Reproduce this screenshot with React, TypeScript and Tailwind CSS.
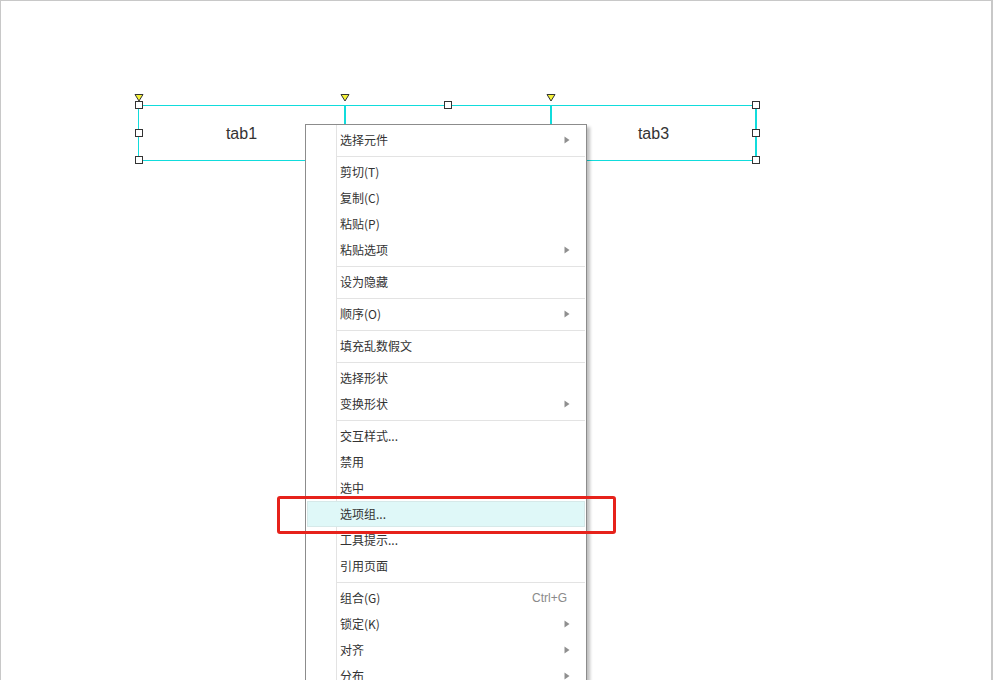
import React from "react";

type Item =
  | { sep: true }
  | { sep?: false; label: string; sub?: boolean; hint?: string; active?: boolean };

const items: Item[] = [
  { label: "选择元件", sub: true },
  { sep: true },
  { label: "剪切(T)" },
  { label: "复制(C)" },
  { label: "粘贴(P)" },
  { label: "粘贴选项", sub: true },
  { sep: true },
  { label: "设为隐藏" },
  { sep: true },
  { label: "顺序(O)", sub: true },
  { sep: true },
  { label: "填充乱数假文" },
  { sep: true },
  { label: "选择形状" },
  { label: "变换形状", sub: true },
  { sep: true },
  { label: "交互样式..." },
  { label: "禁用" },
  { label: "选中" },
  { label: "选项组...", active: true },
  { label: "工具提示..." },
  { label: "引用页面" },
  { sep: true },
  { label: "组合(G)", hint: "Ctrl+G" },
  { label: "锁定(K)", sub: true },
  { label: "对齐", sub: true },
  { label: "分布", sub: true },
];

// canvas coords are page pixels; root has a 1px border so offsets subtract 1
function Handle({ x, y }: { x: number; y: number }) {
  return (
    <div
      className="absolute h-[8px] w-[8px] border border-[#333] bg-white"
      style={{ left: x - 5, top: y - 5 }}
    />
  );
}

function Marker({ x }: { x: number }) {
  return (
    <svg className="absolute" style={{ left: x - 6, top: 92 }} width="10" height="9" viewBox="0 0 10 9">
      <path d="M1 1.5 H9 L5 8 Z" fill="#f5f23a" stroke="#333" strokeWidth="1" strokeLinejoin="round" />
    </svg>
  );
}

export default function App() {
  return (
    <div
      className="relative h-[680px] w-[993px] overflow-hidden border-l border-t border-r-2 border-[#c8c8c8] bg-white"
      style={{ fontFamily: '"Liberation Sans", "Noto Sans CJK SC", sans-serif' }}
    >
      {/* tab widget on canvas */}
      <div className="absolute left-[137px] top-[104px] flex h-[56px] w-[619px] border border-r-2 border-[#11dcdc] pt-[2px] text-[16px] text-[#333]">
        <div className="flex w-[205px] items-center justify-center">tab1</div>
        <div className="-mt-[2px] w-[2px] bg-[#11dcdc]" />
        <div className="flex w-[204px] items-center justify-center">tab2</div>
        <div className="-mt-[2px] w-[2px] bg-[#11dcdc]" />
        <div className="flex flex-1 items-center justify-center">tab3</div>
      </div>
      <Handle x={139} y={105} />
      <Handle x={139} y={133} />
      <Handle x={139} y={160} />
      <Handle x={448} y={105} />
      <Handle x={756} y={105} />
      <Handle x={756} y={133} />
      <Handle x={756} y={160} />
      <Marker x={139} />
      <Marker x={345} />
      <Marker x={551} />

      {/* context menu */}
      <div className="absolute left-[304px] top-[123px] w-[282px] border border-[#8c8c8c] bg-white pb-[1px] pt-[2px] text-[12px] text-[#333] shadow-[3px_3px_3px_rgba(0,0,0,0.25)]">
        <div className="absolute bottom-0 left-[30px] top-0 w-px bg-[#e3e3e3]" />
        {items.map((it, i) =>
          it.sep ? (
            <div key={i} className="flex h-[6px] items-center pl-[30px] pr-[1px]">
              <div className="h-px w-full bg-[#e3e3e3]" />
            </div>
          ) : (
            <div
              key={i}
              className={`relative mx-[1px] flex h-[26px] items-center pl-[33px] pr-[14px] ${
                it.active ? "border border-[#d6e9e9] bg-[#dff8f8]" : ""
              }`}
            >
              <span className={`flex-1 ${it.active ? "-ml-px" : ""}`} style={{ fontFamily: '"Noto Sans CJK SC", sans-serif' }}>
                {it.label}
              </span>
              {it.hint && <span className="pr-[4px] text-[#8a8a8a]">{it.hint}</span>}
              {it.sub && (
                <svg width="6" height="8" viewBox="0 0 6 8" className="mr-[1px]">
                  <path d="M0.5 0.5 L5.5 4 L0.5 7.5 Z" fill="#8f8f8f" />
                </svg>
              )}
            </div>
          ),
        )}
      </div>

      {/* annotation */}
      <div className="absolute left-[276px] top-[495px] h-[38px] w-[339px] rounded-[3px] border-[3px] border-[#e6221b]" />
    </div>
  );
}
